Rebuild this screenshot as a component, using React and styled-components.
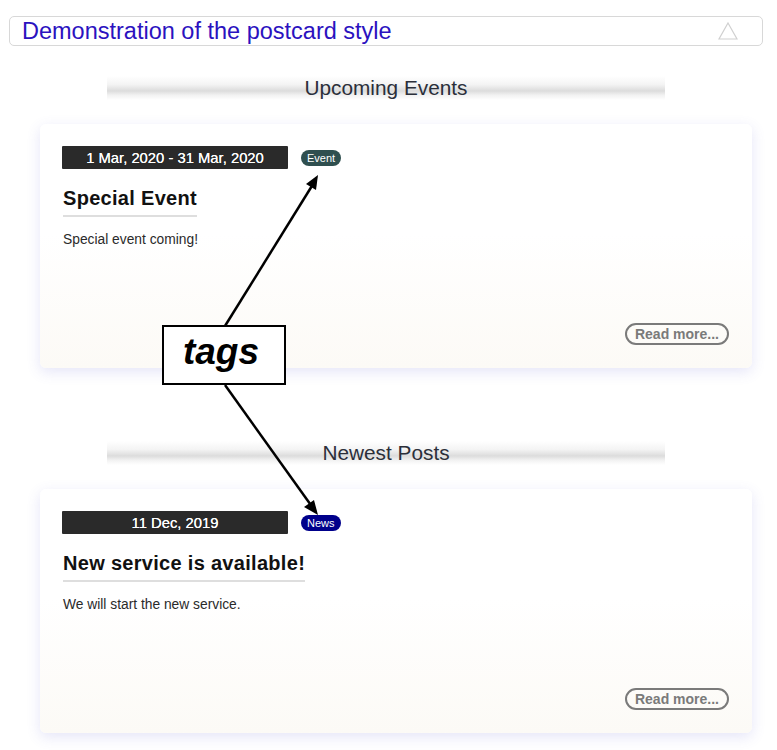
import React from "react";
import styled, { createGlobalStyle } from "styled-components";

const Global = createGlobalStyle`
  html, body { margin: 0; padding: 0; background: #fff; }
  body { font-family: "Liberation Sans", Arial, sans-serif; }
`;

const Page = styled.div`
  position: relative;
  width: 777px;
  height: 750px;
  overflow: hidden;
  padding: 16px 14px 0 9px;
  box-sizing: border-box;
`;

const Header = styled.div`
  display: flex;
  align-items: center;
  justify-content: space-between;
  height: 30px;
  box-sizing: border-box;
  border: 1px solid #d8d8d8;
  border-radius: 5px;
  padding: 0 24px 0 12px;
`;

const HeaderTitle = styled.h1`
  margin: 0;
  font-size: 23.5px;
  font-weight: normal;
  color: #2b12bf;
  line-height: 28px;
`;

const Section = styled.section`
  display: flex;
  flex-direction: column;
  margin-top: ${(p) => p.$top}px;
`;

const Band = styled.h2`
  align-self: center;
  width: 558px;
  height: 24px;
  margin: 0 0 24px 0;
  display: flex;
  align-items: center;
  justify-content: center;
  font-size: 20.8px;
  font-weight: normal;
  color: #2b2f3a;
  background: linear-gradient(
    to bottom,
    #ffffff 0%,
    #f4f4f4 35%,
    #dcdcdc 62%,
    #f2f2f2 80%,
    #ffffff 100%
  );
`;

const Card = styled.article`
  margin: 0 11px 0 31px;
  height: 244px;
  box-sizing: border-box;
  padding: 22px 23px 23px 22px;
  border-radius: 6px;
  display: flex;
  flex-direction: column;
  align-items: flex-start;
  background: linear-gradient(to bottom, #ffffff 45%, #fcfaf6 100%);
  box-shadow: 0 4px 14px rgba(95, 95, 210, 0.16);
`;

const MetaRow = styled.div`
  display: flex;
  align-items: center;
  gap: 13px;
`;

const DateBox = styled.div`
  width: 226px;
  height: 23px;
  background: #2a2a2a;
  color: #fff;
  border-radius: 1px;
  display: flex;
  align-items: center;
  justify-content: center;
  font-size: 14.8px;
  text-shadow: 0 0 0.4px #fff;
`;

const Tag = styled.span`
  height: 16px;
  padding: 0 6px;
  border-radius: 8px;
  background: ${(p) => p.$color};
  color: #fff;
  font-size: 11px;
  display: inline-flex;
  align-items: center;
  margin-top: 1px;
`;

const Title = styled.h3`
  margin: 18px 0 0 1px;
  padding-bottom: 5px;
  font-size: 20px;
  font-weight: bold;
  color: #111;
  letter-spacing: 0.3px;
  border-bottom: 2px solid #dedede;
`;

const Body = styled.p`
  margin: 15px 0 0 1px;
  font-size: 13.8px;
  color: #2a2a2a;
`;

const ReadMore = styled.button`
  margin-top: auto;
  align-self: flex-end;
  height: 22px;
  padding: 0 8px;
  border: 2px solid #7a7a7a;
  border-radius: 12px;
  background: transparent;
  color: #7a7a7a;
  font-family: "Liberation Sans", Arial, sans-serif;
  font-weight: bold;
  font-size: 14px;
  line-height: 18px;
`;

const Arrows = styled.svg`
  position: absolute;
  left: 0;
  top: 0;
  pointer-events: none;
`;

const Callout = styled.div`
  position: absolute;
  left: 162px;
  top: 325px;
  width: 124px;
  height: 60px;
  box-sizing: border-box;
  border: 2px solid #000;
  background: #fff;
  display: flex;
  align-items: center;
  justify-content: center;
  font-size: 37px;
  font-weight: bold;
  font-style: italic;
  color: #000;
  padding: 0 6px 6px 0;
`;

const Triangle = () => (
  <svg width="20" height="18" viewBox="0 0 20 18">
    <path d="M10 1 L19 17 L1 17 Z" fill="none" stroke="#d0d0d0" strokeWidth="1.2" />
  </svg>
);

const posts = [
  {
    heading: "Upcoming Events",
    date: "1 Mar, 2020 - 31 Mar, 2020",
    tag: "Event",
    tagColor: "#2f4f4f",
    title: "Special Event",
    body: "Special event coming!",
    top: 30,
  },
  {
    heading: "Newest Posts",
    date: "11 Dec, 2019",
    tag: "News",
    tagColor: "#00008b",
    title: "New service is available!",
    body: "We will start the new service.",
    top: 73,
  },
];

export default function App() {
  return (
    <>
      <Global />
      <Page>
        <Header>
          <HeaderTitle>Demonstration of the postcard style</HeaderTitle>
          <Triangle />
        </Header>
        {posts.map((p) => (
          <Section key={p.heading} $top={p.top}>
            <Band>{p.heading}</Band>
            <Card>
              <MetaRow>
                <DateBox>{p.date}</DateBox>
                <Tag $color={p.tagColor}>{p.tag}</Tag>
              </MetaRow>
              <Title>{p.title}</Title>
              <Body>{p.body}</Body>
              <ReadMore>Read more...</ReadMore>
            </Card>
          </Section>
        ))}
        <Arrows width="777" height="750" viewBox="0 0 777 750">
          <line x1="225" y1="326" x2="315" y2="181" stroke="#000" strokeWidth="2.5" />
          <path d="M318 175 L306 184 L316 190 Z" fill="#000" />
          <line x1="225" y1="385" x2="313" y2="508" stroke="#000" strokeWidth="2.5" />
          <path d="M318 515 L304 507 L314 500 Z" fill="#000" />
        </Arrows>
        <Callout>tags</Callout>
      </Page>
    </>
  );
}
